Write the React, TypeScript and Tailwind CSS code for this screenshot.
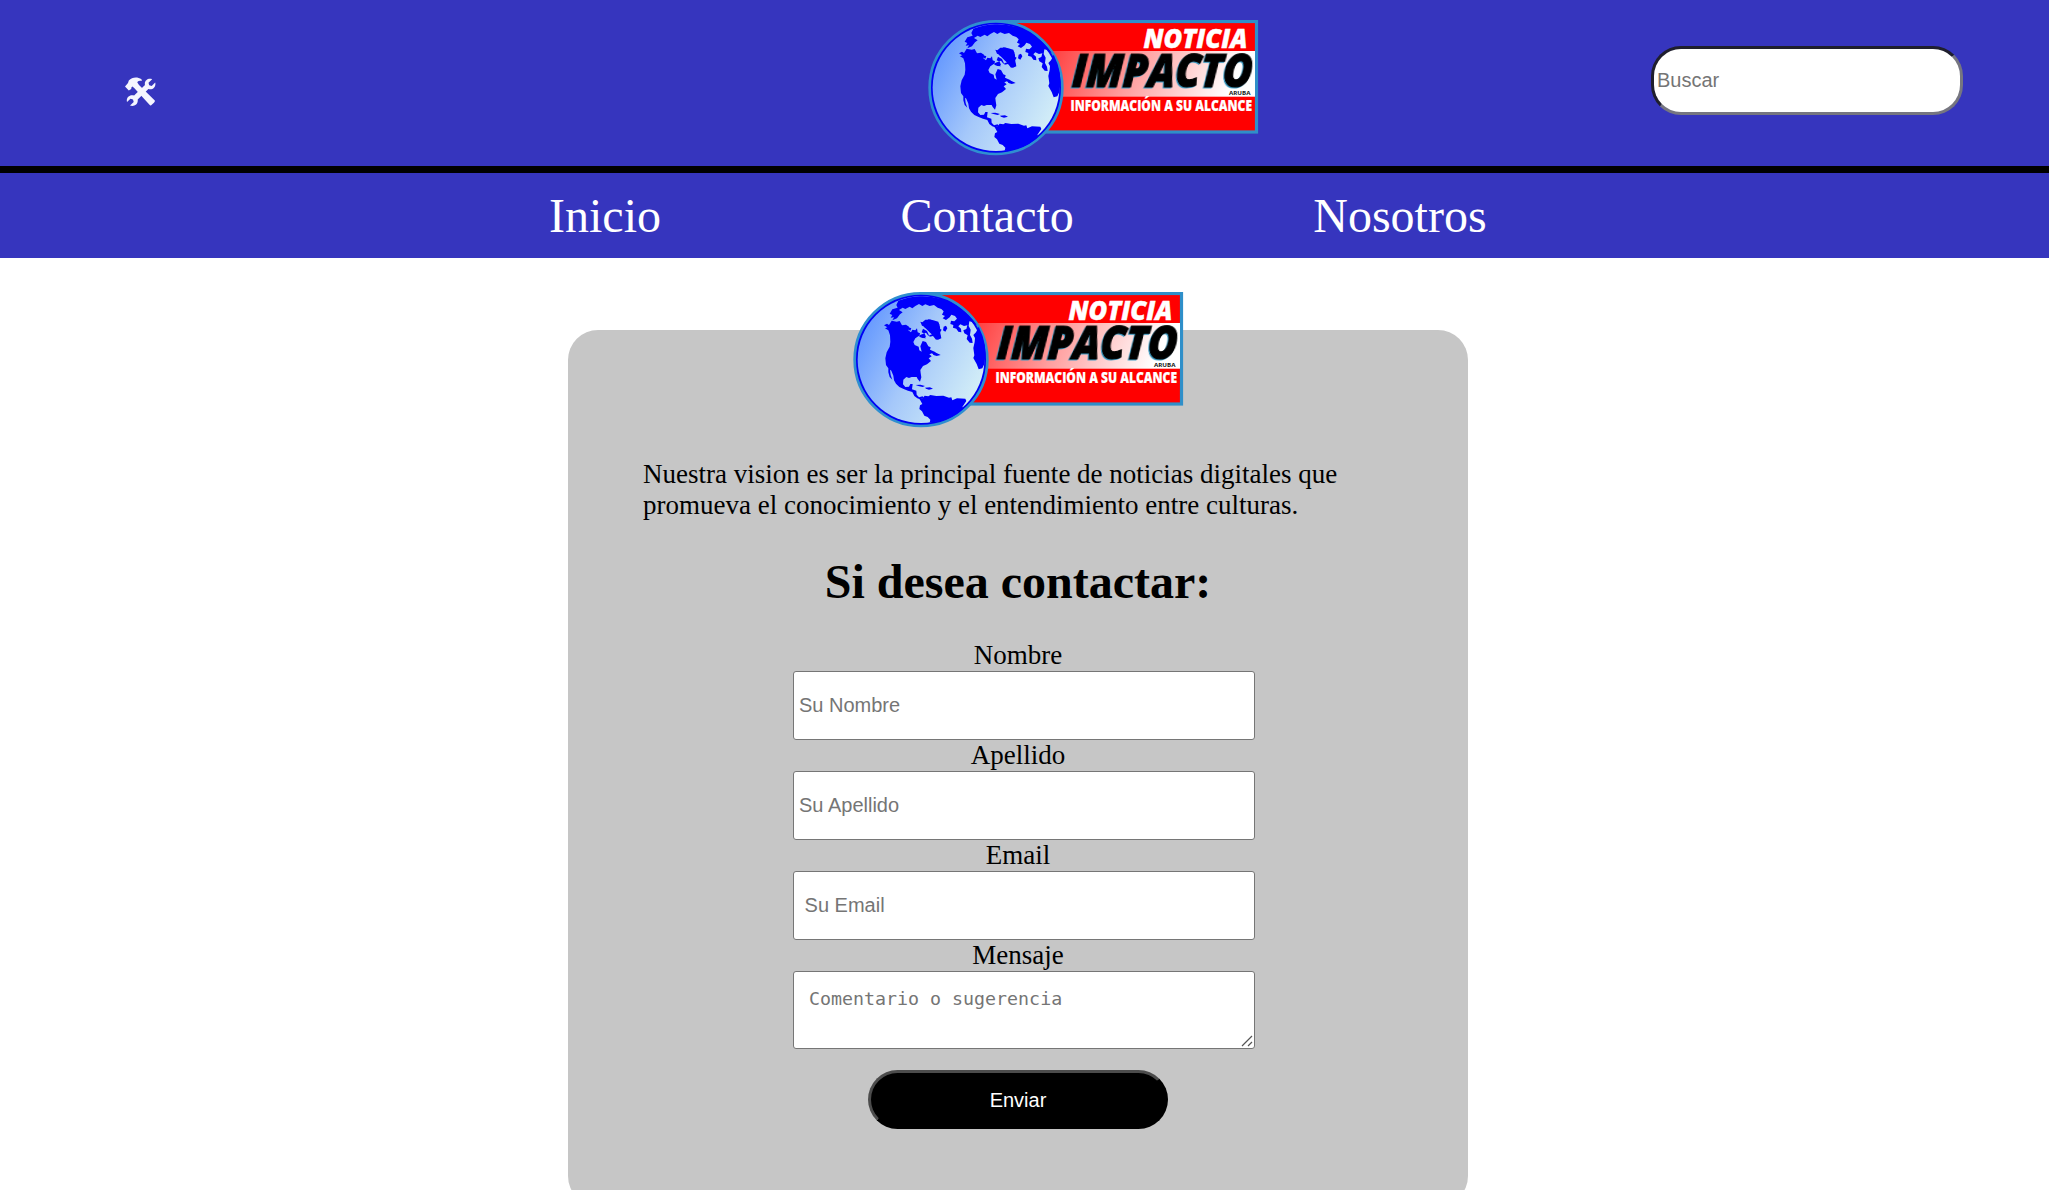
import React from "react";

function Globe() {
  return (
    <g transform="translate(-3 -5) scale(0.33333)">
      <circle cx="213" cy="218" r="199" fill="#0000f5" stroke="#2f8fd0" strokeWidth="8" />
      <circle cx="213" cy="218" r="190" fill="url(#ocean)" />
      <g fill="#0000fb">
        <path d="M145 41L139 54L143 62L127 67L119 80L127 84L122 92L132 91L127 100L141 94L150 82L158 76L147 69L158 62L166 66L179 59L187 64L196 57L207 51L217 57L226 52L239 57L252 54L263 62L274 66L281 73L276 83L285 87L278 94L288 99L299 91L304 83L315 87L321 95L313 103L303 101L301 111L310 114L309 122L319 125L325 134L334 136L333 125L325 118L331 112L342 117L352 115L349 126L340 130L343 139L353 145L350 156L359 167L368 168L366 155L360 144L362 128L356 117L358 103L367 105L372 112L380 113A198 198 0 0 0 145 41Z" />
        <path d="M102 115L111 110L117 114L125 101L140 104L149 102L156 115L168 113L177 119L175 130L183 136L187 128L196 130L201 124L203 136L210 139L208 149L217 153L228 149L224 140L215 136L219 125L231 132L239 149L249 147L258 158L269 156L273 151L268 139L275 128L266 124L268 112L261 105L252 106L243 98L226 98L217 106L211 104L216 116L230 121L242 132L246 142L235 146L228 137L212 143L196 154L190 165L194 174L206 179L208 190L215 194L211 178L218 162L228 165L235 178L242 181L240 188L254 194L262 204L253 205L246 199L238 202L245 208L236 214L243 222L231 232L219 237L211 249L212 258L214 271L210 284L203 276L200 270L185 270L177 273L169 270L160 278L159 292L166 300L177 299L181 291L188 291L186 307L199 311L200 323L207 331L218 328L221 334L210 337L202 334L193 327L187 315L174 311L161 306L148 300L138 290L132 280L130 266L124 251L120 248L122 264L127 278L119 270L115 256L115 244L108 234L106 214L110 196L119 179L121 164L120 145L115 130L105 124L112 121Z" />
        <path d="M223 105L236 97L250 100L265 104L270 119L271 139L274 154L263 158L253 148L240 137L229 126L221 119Z" />
        <path d="M281 119L288 116L292 124L286 134L279 130ZM246 194L255 196L272 204L260 207L250 203ZM211 144L222 146L228 154L218 153ZM197 294L211 293L225 297L218 300L205 297ZM225 302L240 301L249 305L237 308L228 305ZM172 119L184 124L181 131L173 127Z" />
        <path d="M207 333L216 335L224 326L235 328L241 324L259 327L280 326L297 332L304 331L307 340L321 334L346 335L349 342L337 360L341 364C316 389 282 405 239 407L241 398L233 390L223 386L216 373L208 366L210 355L217 351Z" />
        <path d="M374 165L370 183L373 205L370 213L380 231L386 247L397 244L403 231Q415 175 386 119L378 136L370 144L375 153Z" />
      </g>
    </g>
  );
}

function Logo() {
  return (
    <svg width="331" height="136" viewBox="0 0 331 136" role="img" aria-label="Noticia Impacto Aruba" className="block shrink-0">
      <defs>
        <linearGradient id="ocean" x1="0" y1="0.15" x2="1" y2="0.65">
          <stop offset="0" stopColor="#5b91ff" />
          <stop offset="0.5" stopColor="#a5c8fa" />
          <stop offset="1" stopColor="#d3eef7" />
        </linearGradient>
        <linearGradient id="band" x1="0" y1="0" x2="1" y2="0.1">
          <stop offset="0" stopColor="#ff3c3c" />
          <stop offset="0.45" stopColor="#ff9e9e" />
          <stop offset="0.95" stopColor="#ffffff" />
        </linearGradient>
      </defs>
      <rect x="68" y="1.5" width="260.5" height="110.5" fill="#ff0000" stroke="#2f8fc9" strokeWidth="3.2" />
      <rect x="120" y="31" width="207" height="45.7" fill="url(#band)" />
      <Globe />
      <g fontFamily="Open Sans, Liberation Sans, sans-serif" fontWeight="800">
        <text x="215.5" y="28" fontSize="26.5" fontStyle="italic" fill="#fff" stroke="#fff" strokeWidth="0.5" textLength="104" lengthAdjust="spacingAndGlyphs">NOTICIA</text>
        <g transform="translate(143.5 67) skewX(-4)" className="drop-shadow-[-1px_1px_0_#3a9cc4]">
          <text x="0" y="0" fontSize="45" fontStyle="italic" fill="#000" stroke="#000" strokeWidth="1.1" textLength="180" lengthAdjust="spacingAndGlyphs">IMPACTO</text>
        </g>
        <text x="301" y="75.4" fontSize="5.8" fontWeight="700" fill="#111" textLength="21.5" lengthAdjust="spacingAndGlyphs">ARUBA</text>
        <text x="142.5" y="90.5" fontSize="15" fill="#fff" stroke="#fff" strokeWidth="0.2" textLength="181.5" lengthAdjust="spacingAndGlyphs">INFORMACIÓN A SU ALCANCE</text>
      </g>
    </svg>
  );
}

function Tools() {
  return (
    <svg width="31" height="30" viewBox="0 0 31 30" fill="#f5f5ff" className="block">
      <path d="M0 9.5L3 6L3.8 3.5C7 .4 11.8-.5 16.5 2.2L16.8 4C14 3.2 12.8 4 12.3 5.6L14 8L29.8 23.6Q30.5 24.7 26.2 28.2Q25.3 28.7 24.5 27.8L9.2 11L7.4 9.6L6.5 10.3L6.2 12L3.8 13.5Z" />
      <path d="M27.2 2.2L23.5 5.8L24.2 8.3L26.7 9L30.2 5.4C31.2 9.4 28.3 13.3 23.4 12.1L12.7 22.5C13.4 27.2 9.2 30 5 28.5L8.7 25L8 22.4L5.5 21.7L2 25.1C.9 20.8 4.4 17.2 9.1 18.6L20 8C18.9 3.9 22.9 .7 27.2 2.2Z" />
    </svg>
  );
}

const fieldClass =
  "block h-[69px] w-[462px] rounded-[3px] border border-[#767676] bg-white pl-[5px] font-['Liberation_Sans',Arial,sans-serif] text-[20px] placeholder:text-[#757575] placeholder:opacity-100";

function Field({ label, placeholder }: { label: string; placeholder: string }) {
  return (
    <label className="flex h-[100px] flex-col items-center">
      <span className="h-[31px] leading-[31px]">{label}</span>
      <span className="pl-[12px]">
        <input type="text" placeholder={placeholder} className={fieldClass} />
      </span>
    </label>
  );
}

export default function App() {
  return (
    <div className="h-[1190px] overflow-hidden bg-white font-['Liberation_Serif','Times_New_Roman',serif] text-black">
      <header className="flex h-[173px] items-start border-b-[7px] border-black bg-[#3635be]">
        <div className="w-[928px] pt-[77px] pl-[125px]">
          <Tools />
        </div>
        <div className="w-[723px] pt-[20px]">
          <Logo />
        </div>
        <input
          type="search"
          placeholder="Buscar"
          className="mt-[46px] h-[69px] w-[312px] rounded-[30px] border-[3px] border-t-[#1f1f2e] border-r-[#767680] border-b-[#767680] border-l-[#1f1f2e] bg-white px-[3px] font-['Liberation_Sans',Arial,sans-serif] text-[20px] placeholder:text-[#757575] placeholder:opacity-100"
        />
      </header>
      <nav className="flex h-[85px] gap-[239.5px] bg-[#3635be] pt-[15px] pl-[549px] text-[48px] leading-[55px] text-white">
        <a href="#inicio">Inicio</a>
        <a href="#contacto">Contacto</a>
        <a href="#nosotros">Nosotros</a>
      </nav>
      <main className="mt-[72px] ml-[568px] flex h-[876px] w-[900px] flex-col items-center rounded-[30px] bg-[#c6c6c6] text-[27px]">
        <div className="-mt-[38.5px] mr-[-1px]">
          <Logo />
        </div>
        <p className="mt-[31.5px] w-[750px] leading-[31px]">
          Nuestra vision es ser la principal fuente de noticias digitales que
          <br />
          promueva el conocimiento y el entendimiento entre culturas.
        </p>
        <h1 className="mt-[33px] text-[48px] leading-[55px] font-bold">Si desea contactar:</h1>
        <form className="mt-[31px] flex flex-col items-center">
          <Field label="Nombre" placeholder="Su Nombre" />
          <Field label="Apellido" placeholder="Su Apellido" />
          <Field label="Email" placeholder=" Su Email" />
          <label className="flex flex-col items-center">
            <span className="h-[31px] leading-[31px]">Mensaje</span>
            <span className="relative ml-[12px]">
              <textarea
                placeholder="Comentario o sugerencia"
                className="block h-[78px] w-[462px] resize-none rounded-[3px] border border-[#767676] bg-white px-[15px] py-[15px] font-['DejaVu_Sans_Mono',monospace] text-[18.3px] leading-[23px] placeholder:text-[#757575] placeholder:opacity-100"
              />
              <svg width="12" height="12" viewBox="0 0 12 12" className="absolute right-[2px] bottom-[2px]" stroke="#555" strokeWidth="1.2">
                <path d="M1 11L11 1M7 11L11 7" />
              </svg>
            </span>
          </label>
          <button
            type="button"
            className="mt-[21px] h-[59px] w-[300px] rounded-[30px] border-[3px] border-t-[#4c4c4c] border-r-black border-b-black border-l-[#4c4c4c] bg-black font-['Liberation_Sans',Arial,sans-serif] text-[20px] text-white"
          >
            Enviar
          </button>
        </form>
      </main>
    </div>
  );
}
